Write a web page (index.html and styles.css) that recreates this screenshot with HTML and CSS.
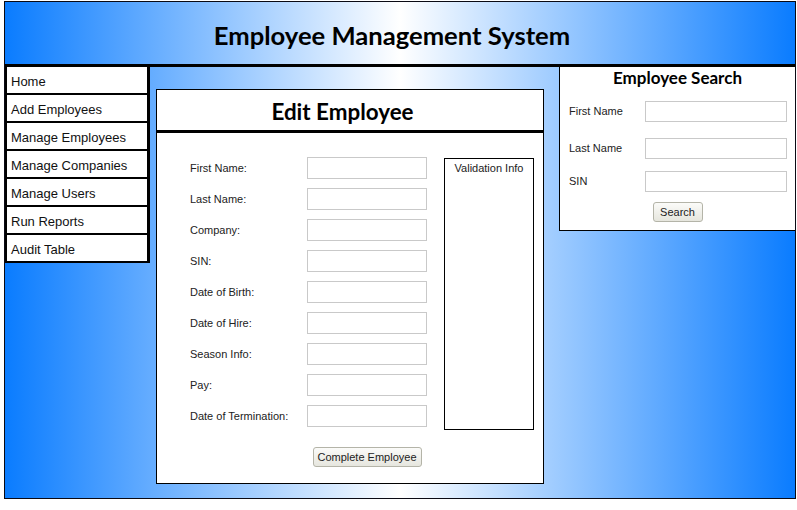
FILE: index.html
```html
<!DOCTYPE html>
<html>
<head>
<meta charset="utf-8">
<title>Employee Management System</title>
<link rel="stylesheet" href="styles.css">
</head>
<body>
<div class="page">
  <header class="header">
    <h1 class="site-title">Employee Management System</h1>
  </header>
  <div class="content">
    <nav class="nav">
      <a class="nav-item" href="#">Home</a>
      <a class="nav-item" href="#">Add Employees</a>
      <a class="nav-item" href="#">Manage Employees</a>
      <a class="nav-item" href="#">Manage Companies</a>
      <a class="nav-item" href="#">Manage Users</a>
      <a class="nav-item" href="#">Run Reports</a>
      <a class="nav-item" href="#">Audit Table</a>
    </nav>
    <section class="edit-panel">
      <h2 class="edit-title">Edit Employee</h2>
      <div class="edit-body">
        <div class="edit-grid">
          <label class="field-label">First Name:</label><input class="field-input" type="text">
          <label class="field-label">Last Name:</label><input class="field-input" type="text">
          <label class="field-label">Company:</label><input class="field-input" type="text">
          <label class="field-label">SIN:</label><input class="field-input" type="text">
          <label class="field-label">Date of Birth:</label><input class="field-input" type="text">
          <label class="field-label">Date of Hire:</label><input class="field-input" type="text">
          <label class="field-label">Season Info:</label><input class="field-input" type="text">
          <label class="field-label">Pay:</label><input class="field-input" type="text">
          <label class="field-label">Date of Termination:</label><input class="field-input" type="text">
          <button class="btn btn-complete" type="button">Complete Employee</button>
        </div>
        <div class="validation">Validation Info</div>
      </div>
    </section>
    <aside class="search-panel">
      <h3 class="search-title">Employee Search</h3>
      <div class="search-grid">
        <label class="search-label">First Name</label><input class="search-input" type="text">
        <label class="search-label">Last Name</label><input class="search-input" type="text">
        <label class="search-label">SIN</label><input class="search-input" type="text">
      </div>
      <div class="search-actions">
        <button class="btn btn-search" type="button">Search</button>
      </div>
    </aside>
  </div>
</div>
</body>
</html>
```

FILE: styles.css
```css
html, body {
  margin: 0;
  padding: 0;
  background: #ffffff;
}

body {
  font-family: "Liberation Sans", Arial, sans-serif;
  color: #222;
}

.page {
  margin: 1px 0 0 4px;
  width: 792px;
  height: 498px;
  box-sizing: border-box;
  border: 1px solid #0a0a14;
  display: flex;
  flex-direction: column;
}

.header {
  height: 65px;
  box-sizing: border-box;
  border-bottom: 3px solid #000;
  background: linear-gradient(to right, #0a7cff 0%, #ffffff 50%, #0a7cff 100%);
  display: flex;
  align-items: center;
  justify-content: center;
}

.site-title {
  margin: 0;
  font-family: "Lato", "Open Sans", sans-serif;
  font-weight: 700;
  font-size: 25.6px;
  color: #000;
  padding: 3px 16px 0 0;
}

.content {
  flex: 1;
  display: flex;
  align-items: flex-start;
  background: linear-gradient(to right, #0a7cff 0%, #ffffff 50%, #0a7cff 100%);
}

.nav {
  width: 145px;
  box-sizing: border-box;
  border-left: 2px solid #000;
  border-right: 3px solid #000;
  background: #fff;
  display: flex;
  flex-direction: column;
}

.nav-item {
  display: block;
  height: 28px;
  box-sizing: border-box;
  border-bottom: 2px solid #000;
  padding: 1px 0 0 4px;
  line-height: 27px;
  font-size: 13px;
  color: #111;
  text-decoration: none;
}

.edit-panel {
  margin: 22px 0 0 6px;
  width: 388px;
  height: 395px;
  box-sizing: border-box;
  border: 1px solid #000;
  background: #fff;
}

.edit-title {
  margin: 0;
  height: 43px;
  box-sizing: border-box;
  border-bottom: 3px solid #000;
  text-align: center;
  font-family: "Lato", "Open Sans", sans-serif;
  font-weight: 700;
  font-size: 22.4px;
  line-height: 44px;
  padding-right: 15px;
  color: #000;
}

.edit-body {
  display: flex;
  align-items: flex-start;
  padding: 24px 0 0 33px;
}

.edit-grid {
  display: grid;
  grid-template-columns: 117px 120px;
  grid-auto-rows: 22px;
  row-gap: 9px;
  align-items: center;
}

.field-label {
  font-size: 11px;
  color: #222;
}

.field-input,
.search-input {
  box-sizing: border-box;
  height: 22px;
  width: 120px;
  margin: 0;
  border: 1px solid #c9c9c9;
  background: #fff;
  padding: 0 3px;
}

.btn {
  font-family: "Liberation Sans", Arial, sans-serif;
  font-size: 11px;
  color: #222;
  background: linear-gradient(#fbfbf9, #e6e6de);
  border: 1px solid #b4b4a8;
  border-radius: 3px;
  height: 20px;
  padding: 0;
  margin: 0;
}

.btn-complete {
  grid-column: 2;
  justify-self: center;
  width: 109px;
  margin-top: 19px;
}

.validation {
  margin: 1px 0 0 17px;
  width: 90px;
  height: 272px;
  box-sizing: border-box;
  border: 1px solid #000;
  text-align: center;
  font-size: 11px;
  padding-top: 3px;
  color: #222;
}

.search-panel {
  margin-left: auto;
  width: 236px;
  height: 164px;
  box-sizing: border-box;
  border-left: 1px solid #000;
  border-bottom: 1px solid #000;
  background: #fff;
}

.search-title {
  margin: 0;
  height: 22px;
  text-align: center;
  font-family: "Lato", "Open Sans", sans-serif;
  font-weight: 700;
  font-size: 17px;
  line-height: 22px;
  color: #000;
}

.search-grid {
  display: grid;
  grid-template-columns: 76px 142px;
  grid-template-rows: 37px 33px 21px;
  align-items: start;
  padding: 12px 0 0 9px;
}

.search-label {
  font-size: 11px;
  line-height: 21px;
  color: #222;
}

.search-input {
  width: 142px;
  height: 21px;
}

.search-actions {
  display: flex;
  justify-content: center;
  padding-top: 10px;
}

.btn-search {
  width: 50px;
}
```
